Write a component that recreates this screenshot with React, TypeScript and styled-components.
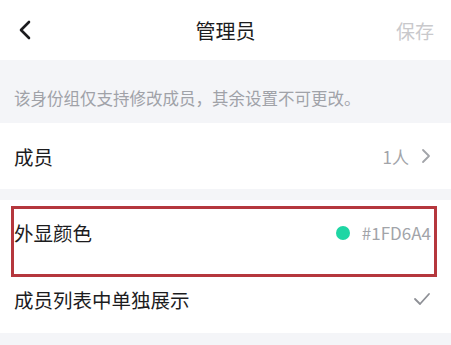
import styled, {createGlobalStyle} from "styled-components";

const GlobalStyle = createGlobalStyle`
    html, body {
        margin: 0;
        padding: 0;
        background: #ffffff;
        font-family: "Noto Sans CJK SC", "Noto Sans", sans-serif;
    }
`;

const Page = styled.div`
    width: 451px;
    height: 345px;
    overflow: hidden;
    background: #f4f5f8;
    display: flex;
    flex-direction: column;
`;

const NavBar = styled.header`
    height: 60px;
    background: #ffffff;
    display: grid;
    grid-template-columns: 80px 1fr 80px;
    align-items: center;
`;

const BackButton = styled.button`
    border: 0;
    background: none;
    padding: 0 0 0 17px;
    display: flex;
    align-items: center;
    height: 100%;
`;

const Title = styled.h1`
    margin: 0;
    font-size: 20px;
    font-weight: 400;
    color: #1c1c1e;
    text-align: center;
`;

const SaveButton = styled.span`
    font-size: 19px;
    color: #c9c9cc;
    text-align: right;
    padding-right: 17px;
`;

const Notice = styled.p`
    margin: 0;
    height: 63px;
    box-sizing: border-box;
    padding: 26px 14px 0;
    font-size: 16.5px;
    color: #a0a2a8;
    white-space: nowrap;
`;

const Group = styled.section<{$gap?: number}>`
    background: #ffffff;
    margin-top: ${({$gap}) => $gap ?? 0}px;
`;

const Row = styled.div<{$height: number}>`
    position: relative;
    height: ${({$height}) => $height}px;
    display: flex;
    align-items: center;
    justify-content: space-between;
    padding: 0 20px 0 14px;
`;

const Label = styled.span`
    font-size: 19.5px;
    color: #1c1c1e;
`;

const Value = styled.span`
    display: flex;
    align-items: center;
    gap: 12px;
    font-size: 17px;
    color: #a2a4a9;
`;

const Dot = styled.span<{$color: string}>`
    width: 14px;
    height: 14px;
    border-radius: 50%;
    background: ${({$color}) => $color};
`;

const Highlight = styled.div`
    position: absolute;
    left: 11px;
    right: 14px;
    top: 6px;
    bottom: -12px;
    border: 3px solid #b5373d;
    pointer-events: none;
`;

function App() {
    return (
        <>
            <GlobalStyle/>
            <Page>
                <NavBar>
                    <BackButton>
                        <svg width="16" height="20" viewBox="0 0 16 20">
                            <path d="M12 2 L4 10 L12 18" fill="none" stroke="#1c1c1e" strokeWidth="2.6"
                                  strokeLinecap="round" strokeLinejoin="round"/>
                        </svg>
                    </BackButton>
                    <Title>管理员</Title>
                    <SaveButton>保存</SaveButton>
                </NavBar>
                <Notice>该身份组仅支持修改成员，其余设置不可更改。</Notice>
                <Group>
                    <Row $height={66}>
                        <Label>成员</Label>
                        <Value>
                            1人
                            <svg width="10" height="16" viewBox="0 0 10 16">
                                <path d="M2 2 L8 8 L2 14" fill="none" stroke="#a2a4a9" strokeWidth="1.8"
                                      strokeLinecap="round" strokeLinejoin="round"/>
                            </svg>
                        </Value>
                    </Row>
                </Group>
                <Group $gap={11}>
                    <Row $height={65}>
                        <Label>外显颜色</Label>
                        <Value>
                            <Dot $color="#1FD6A4"/>
                            #1FD6A4
                        </Value>
                        <Highlight/>
                    </Row>
                    <Row $height={68}>
                        <Label>成员列表中单独展示</Label>
                        <svg width="18" height="14" viewBox="0 0 18 14">
                            <path d="M2 7 L7 12 L16 2" fill="none" stroke="#8e9096" strokeWidth="1.8"
                                  strokeLinecap="round" strokeLinejoin="round"/>
                        </svg>
                    </Row>
                </Group>
            </Page>
        </>
    );
}

export default App;
